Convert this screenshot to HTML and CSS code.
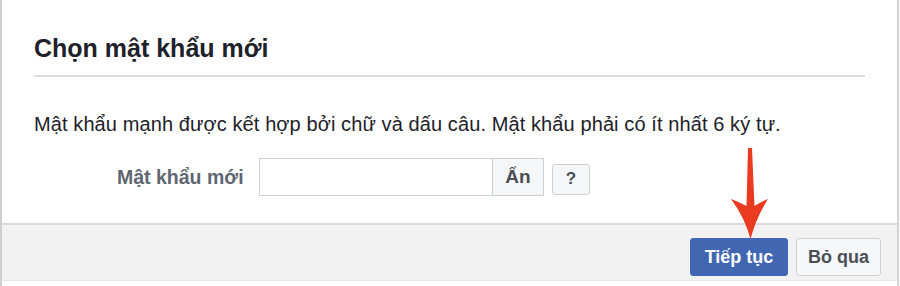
FILE: index.html
```html
<!DOCTYPE html>
<html lang="vi">

<head>
    <meta charset="utf-8">
    <meta name="viewport" content="width=device-width, initial-scale=1">
    <link rel="stylesheet" href="styles.css">
</head>

<body>

    <!-- Password reset dialog -->
    <div class="dialog">
        <div class="dialog-header">
            <h2 class="dialog-title">Chọn mật khẩu mới</h2>
        </div>

        <div class="dialog-body">
            <p class="hint">Mật khẩu mạnh được kết hợp bởi chữ và dấu câu. Mật khẩu phải có ít nhất 6 ký tự.</p>

            <div class="form-row">
                <label for="newPassword" class="form-label">Mật khẩu mới</label>
                <input type="password" id="newPassword" class="password-input">
                <button type="button" class="toggle-btn">Ẩn</button>
                <button type="button" class="help-btn">?</button>
            </div>
        </div>

        <div class="dialog-footer">
            <button type="submit" class="btn btn-primary">Tiếp tục</button>
            <button type="button" class="btn btn-secondary">Bỏ qua</button>
        </div>
    </div>

    <!-- Red arrow pointing at the continue button -->
    <svg class="arrow" width="900" height="286" viewBox="0 0 900 286">
        <path d="M748 148 L752 148 L754.5 206 Q761 202 768 199 Q756 218 750.5 239 Q745 218 731 199 Q739 202 746.5 206 Z"
            fill="#ea3a1f" />
    </svg>

</body>

</html>
```

FILE: styles.css
```css
* {
    box-sizing: border-box;
}

body {
    margin: 0;
    font-family: "Liberation Sans", Helvetica, Arial, sans-serif;
    background-color: #fff;
    position: relative;
}

/* Dialog frame */
.dialog {
    width: 899px;
    height: 286px;
    border-left: 2px solid #cfcfcf;
    border-right: 2px solid #d4d4d4;
    display: flex;
    flex-direction: column;
}

.dialog-header {
    margin: 0 32px;
    padding: 33px 0 12px;
    border-bottom: 2px solid #dcdcdc;
}

.dialog-title {
    margin: 0;
    font-size: 25px;
    line-height: 30px;
    font-weight: bold;
    color: #1d2129;
}

.dialog-body {
    padding: 35px 32px 0;
    height: 146px;
}

.hint {
    margin: 0;
    font-size: 20px;
    letter-spacing: 0.1px;
    line-height: 24px;
    color: #1d2129;
}

/* Label + input + buttons */
.form-row {
    display: flex;
    align-items: center;
    margin-top: 22px;
    padding-left: 83px;
}

.form-label {
    width: 126px;
    text-align: right;
    margin-right: 16px;
    font-size: 19.5px;
    font-weight: bold;
    color: #606770;
    white-space: nowrap;
}

.password-input {
    width: 233px;
    height: 38px;
    border: 1px solid #d0d0d0;
    border-right: none;
    padding: 0 8px;
    font-size: 17px;
    outline: none;
}

.toggle-btn {
    width: 52px;
    height: 38px;
    border: 1px solid #ccd0d5;
    background-color: #f5f6f7;
    color: #4b4f56;
    font-family: inherit;
    font-size: 19px;
    font-weight: bold;
    padding: 0;
}

.help-btn {
    width: 38px;
    height: 31px;
    margin-left: 8px;
    margin-top: 4px;
    border: 1px solid #ccd0d5;
    border-radius: 3px;
    background-color: #f5f6f7;
    color: #4b4f56;
    font-family: inherit;
    font-size: 17px;
    font-weight: bold;
    padding: 0;
}

/* Footer with actions */
.dialog-footer {
    display: flex;
    justify-content: flex-end;
    gap: 8px;
    height: 58px;
    padding: 13px 16px 0 0;
    border-top: 2px solid #dadada;
    border-bottom: 1px solid #e6e6e6;
    background-color: #f2f2f2;
}

.btn {
    height: 38px;
    border-radius: 3px;
    font-family: inherit;
    font-size: 18px;
    font-weight: bold;
    padding: 0;
    cursor: pointer;
}

.btn-primary {
    width: 98px;
    background-color: #4267b2;
    border: 1px solid #4267b2;
    color: #fff;
}

.btn-secondary {
    width: 85px;
    background-color: #f6f7f9;
    border: 1px solid #ced0d4;
    color: #4b4f56;
}

.arrow {
    position: absolute;
    left: 0;
    top: 0;
    pointer-events: none;
}
```
